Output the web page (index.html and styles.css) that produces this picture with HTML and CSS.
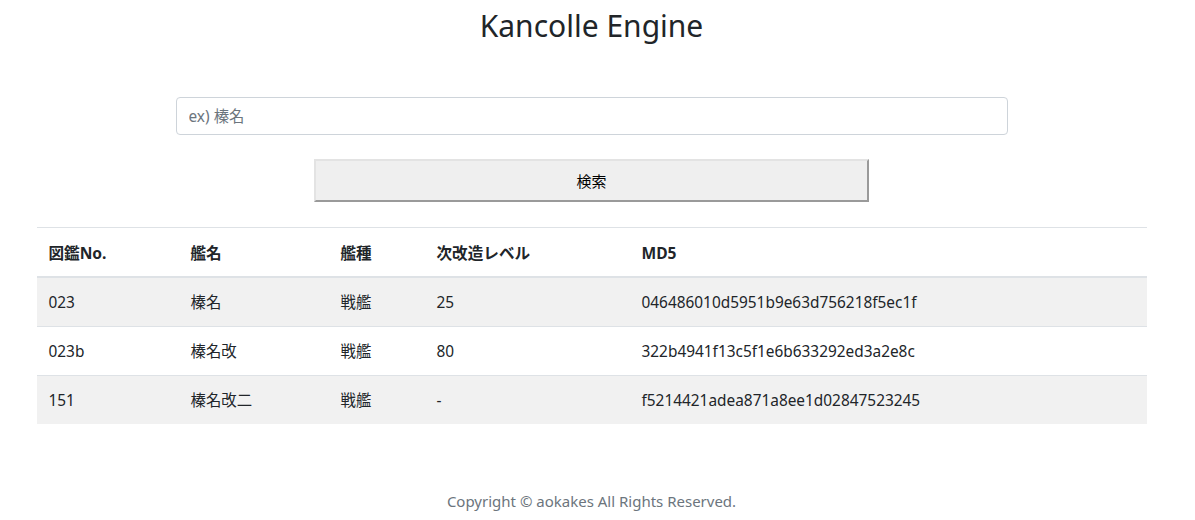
FILE: index.html
```html
<!DOCTYPE html>
<html lang="ja">
<head>
<meta charset="utf-8">
<title>Kancolle Engine</title>
<link rel="stylesheet" href="styles.css">
</head>
<body>
<div class="page">
  <header class="masthead">
    <h1 class="title">Kancolle Engine</h1>
  </header>

  <form class="search" onsubmit="return false;">
    <input class="search-input" type="text" placeholder="ex) 榛名">
    <button class="search-button" type="submit">検索</button>
  </form>

  <table class="ships">
    <thead>
      <tr>
        <th class="c-no">図鑑No.</th>
        <th class="c-name">艦名</th>
        <th class="c-type">艦種</th>
        <th class="c-level">次改造レベル</th>
        <th class="c-md5">MD5</th>
      </tr>
    </thead>
    <tbody>
      <tr>
        <td>023</td>
        <td>榛名</td>
        <td>戦艦</td>
        <td>25</td>
        <td>046486010d5951b9e63d756218f5ec1f</td>
      </tr>
      <tr>
        <td>023b</td>
        <td>榛名改</td>
        <td>戦艦</td>
        <td>80</td>
        <td>322b4941f13c5f1e6b633292ed3a2e8c</td>
      </tr>
      <tr>
        <td>151</td>
        <td>榛名改二</td>
        <td>戦艦</td>
        <td>-</td>
        <td>f5214421adea871a8ee1d02847523245</td>
      </tr>
    </tbody>
  </table>

  <footer class="footer">Copyright © aokakes All Rights Reserved.</footer>
</div>
</body>
</html>
```

FILE: styles.css
```css
* {
  box-sizing: border-box;
}

html, body {
  margin: 0;
  padding: 0;
  background: #fff;
}

body {
  font-family: "Noto Sans", "Noto Sans CJK JP", sans-serif;
  font-size: 15.4px;
  line-height: 24px;
  color: #212529;
  padding-right: 12px;
}

.page {
  width: 1110px;
  margin: 0 auto;
  display: flex;
  flex-direction: column;
  align-items: center;
}

.masthead {
  padding-top: 6px;
}

.title {
  margin: 0;
  font-size: 30px;
  font-weight: 400;
  line-height: 40px;
  color: #212529;
}

.search {
  width: 100%;
  display: flex;
  flex-direction: column;
  align-items: center;
  gap: 24px;
  margin-top: 51px;
}

.search-input {
  width: 832px;
  height: 38px;
  padding: 6px 12px;
  font-family: inherit;
  font-size: 15.4px;
  color: #495057;
  background: #fff;
  border: 1px solid #ced4da;
  border-radius: 4px;
  outline: none;
}

.search-input::placeholder {
  color: #6c757d;
  opacity: 1;
}

.search-button {
  width: 555px;
  height: 43px;
  font-family: "Noto Sans CJK JP", sans-serif;
  font-size: 15px;
  color: #000;
  background: #efefef;
  border: 2px solid;
  border-color: #e3e3e3 #9a9a9a #9a9a9a #e3e3e3;
  border-radius: 0;
  padding: 0;
}

.ships {
  width: 100%;
  margin-top: 25px;
  border-collapse: collapse;
}

.ships th,
.ships td {
  padding: 13px 12px 11px;
  text-align: left;
  vertical-align: top;
  border-top: 1px solid #dee2e6;
}

.ships th {
  font-weight: 700;
  font-size: 15.6px;
  border-bottom: 2px solid #dee2e6;
}

.ships tbody tr:nth-child(odd) {
  background: #f1f1f1;
}

.c-no { width: 142px; }
.c-name { width: 150px; }
.c-type { width: 96px; }
.c-level { width: 205px; }

.footer {
  margin-top: 65px;
  color: #6c757d;
  font-size: 15px;
}
```
